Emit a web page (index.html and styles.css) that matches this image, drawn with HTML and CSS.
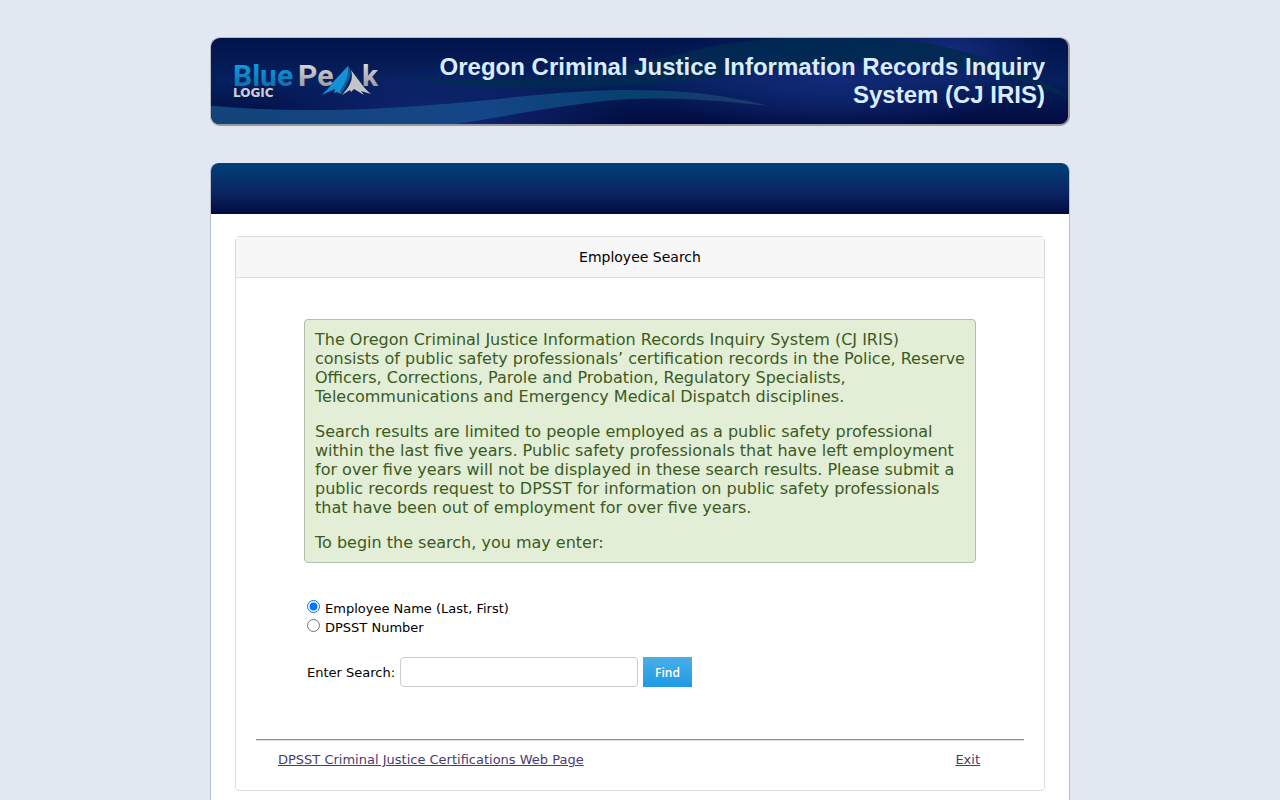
FILE: index.html
```html
<!DOCTYPE html>
<html lang="en">
<head>
    <meta charset="UTF-8">
    <meta name="viewport" content="width=device-width, initial-scale=1.0">
    <title>CJ IRIS - Employee Search</title>
    <link rel="stylesheet" href="styles.css">
</head>
<body>
    <div class="wrapper">
        <header class="banner">
            <svg class="banner-bg" viewBox="0 0 856 85" preserveAspectRatio="none" aria-hidden="true">
                <defs>
                    <linearGradient id="wave" x1="0" x2="1" y1="0" y2="0">
                        <stop offset="0" stop-color="#144a80"/>
                        <stop offset="0.5" stop-color="#15498a"/>
                        <stop offset="0.75" stop-color="#064571"/>
                        <stop offset="1" stop-color="#223c6c"/>
                    </linearGradient>
                    <radialGradient id="glow">
                        <stop offset="0" stop-color="#122a78"/>
                        <stop offset="1" stop-color="#122a78" stop-opacity="0"/>
                    </radialGradient>
                </defs>
                <ellipse cx="620" cy="40" rx="190" ry="55" fill="url(#glow)"/>
                <ellipse cx="740" cy="10" rx="100" ry="40" fill="url(#glow)"/>
                <ellipse cx="230" cy="85" rx="190" ry="60" fill="url(#glow)"/>
                <path d="M195 38 C330 50 420 28 505 7 C600 -7 700 -5 765 18 C810 34 840 43 856 60 C800 34 735 22 650 24 C560 29 500 43 410 47 C320 53 250 50 195 38Z" fill="#002a50" opacity="0.85"/>
                <path d="M0 67 C90 75 180 71 280 61 C350 53 400 50 450 52 C500 54 535 62 557 67 C500 61 450 57 395 62 C340 68 290 78 245 85 L0 85Z" fill="url(#wave)" opacity="0.9"/>
            </svg>
            <svg class="logo" viewBox="0 0 148 36" role="img" aria-label="BluePeak Logic">
                <defs>
                    <linearGradient id="blue" x1="0" x2="0" y1="0" y2="1">
                        <stop offset="0.2" stop-color="#079ee0"/>
                        <stop offset="1" stop-color="#14609c"/>
                    </linearGradient>
                    <linearGradient id="silver" x1="0" x2="0" y1="0" y2="1">
                        <stop offset="0.2" stop-color="#d4d3d5"/>
                        <stop offset="1" stop-color="#8b8c94"/>
                    </linearGradient>
                </defs>
                <text class="logo-name" x="0" y="23" fill="url(#blue)">Blue</text>
                <text class="logo-name" x="65" y="23" fill="url(#silver)">Pe</text>
                <text class="logo-name" x="129" y="23" fill="url(#silver)">k</text>
                <text class="logo-sub" x="0" y="34" fill="#d0d0d4">LOGIC</text>
                <path d="M88 32 C94 28 97 23 101 18 L115 3 C118 8 118 13 115 18 L108 31 L104 29 L101 30 L102 26 C97 28 94 30 88 32Z" fill="#1592d6"/>
                <path d="M115 3 C118 6 119 12 115 19 C113 23 111 27 108 31 L107 28 C112 20 116 13 115 3Z" fill="#125b98"/>
                <path d="M118 7 L127 19 C130 23 134 28 138 31 L128 28 L131 32 L121 26 L118 29 L117 27 L109 32 C116 24 121 17 118 7Z" fill="#c3c4c8"/>
            </svg>
            <h1>Oregon Criminal Justice Information Records Inquiry System (CJ IRIS)</h1>
        </header>

        <main class="content">
            <div class="menu-bar"></div>
            <section class="panel">
                <h2>Employee Search</h2>
                <div class="panel-body">
                    <div class="info">
                        <p>The Oregon Criminal Justice Information Records Inquiry System (CJ IRIS) consists of public safety professionals’ certification records in the Police, Reserve Officers, Corrections, Parole and Probation, Regulatory Specialists, Telecommunications and Emergency Medical Dispatch disciplines.</p>
                        <p>Search results are limited to people employed as a public safety professional within the last five years. Public safety professionals that have left employment for over five years will not be displayed in these search results. Please submit a public records request to DPSST for information on public safety professionals that have been out of employment for over five years.</p>
                        <p>To begin the search, you may enter:</p>
                    </div>
                    <form class="search-form">
                        <div class="option">
                            <input type="radio" id="by-name" name="searchType" checked>
                            <label for="by-name">Employee Name (Last, First)</label>
                        </div>
                        <div class="option">
                            <input type="radio" id="by-number" name="searchType">
                            <label for="by-number">DPSST Number</label>
                        </div>
                        <div class="search-row">
                            <label for="search">Enter Search:</label>
                            <input type="text" id="search" name="search">
                            <button type="button">Find</button>
                        </div>
                    </form>
                    <hr>
                    <div class="links">
                        <a href="#">DPSST Criminal Justice Certifications Web Page</a>
                        <a href="#">Exit</a>
                    </div>
                </div>
            </section>
        </main>
    </div>
</body>
</html>
```
FILE: styles.css
```css
* {
    box-sizing: border-box;
}
body {
    margin: 0;
    background-color: #e1e8f2;
    color: #000;
    font-family: Verdana, "DejaVu Sans", sans-serif;
    font-size: 13px;
}
.wrapper {
    max-width: 860px;
    margin: 0 auto;
    padding-top: 37px;
}

/* Banner */
.banner {
    position: relative;
    display: flex;
    justify-content: space-between;
    align-items: flex-start;
    min-height: 89px;
    padding: 15px 23px 15px 22px;
    border: 1px solid #b5b9c2;
    border-right: 2px solid #999;
    border-bottom: 2px solid #999;
    border-radius: 10px;
    background: linear-gradient(#02134a, #06205e 50%, #020b40);
    overflow: hidden;
}
.banner-bg {
    position: absolute;
    top: 0;
    left: 0;
    width: 100%;
    height: 100%;
}
.logo {
    position: relative;
    flex: none;
    width: 148px;
    height: 36px;
    margin-top: 10px;
    overflow: visible;
}
.logo-name {
    font-family: Roboto, sans-serif;
    font-size: 30px;
    font-weight: 700;
}
.logo-sub {
    font-family: "DejaVu Sans", sans-serif;
    font-size: 12px;
    font-weight: 700;
}
.banner h1 {
    position: relative;
    max-width: 640px;
    margin: 0;
    color: #dcecff;
    font-family: Arial, "Liberation Sans", sans-serif;
    font-size: 24px;
    line-height: 28px;
    text-align: right;
}

/* Main area */
.content {
    margin-top: 37px;
    padding-bottom: 24px;
    border: 1px solid #b8c0cc;
    border-top: 0;
    border-radius: 8px 8px 0 0;
    background-color: #fff;
}
.menu-bar {
    height: 51px;
    border-radius: 8px 8px 0 0;
    background: linear-gradient(#00407a, #0c2461 60%, #000b40);
}
.panel {
    margin: 22px 24px 0;
    border: 1px solid #dcdcdc;
    border-radius: 4px;
}
.panel h2 {
    margin: 0;
    padding: 10px;
    border-bottom: 1px solid #dcdcdc;
    background-color: #f7f7f7;
    font-size: 14px;
    font-weight: 400;
    line-height: 20px;
    text-align: center;
}
.panel-body {
    padding: 41px 20px 21px;
}
.info {
    margin: 0 48px;
    padding: 10px;
    border: 1px solid #b4bcae;
    border-radius: 4px;
    background-color: #e2eed6;
    color: #3c5a1e;
    font-size: 16px;
    line-height: 19px;
}
.info p {
    margin: 0 0 16px;
}
.info p:last-child {
    margin-bottom: 0;
}

/* Search form */
.search-form {
    margin: 36px 51px 0;
}
.option {
    display: flex;
    align-items: center;
    gap: 5px;
    line-height: 19px;
}
.option input {
    width: 13px;
    height: 13px;
    margin: 0 0 4px;
}
.search-row {
    display: flex;
    align-items: center;
    gap: 5px;
    margin-top: 20px;
}
.search-row input {
    width: 238px;
    height: 30px;
    padding: 4px 8px;
    border: 1px solid #ccc;
    border-radius: 4px;
}
.search-row button {
    height: 30px;
    padding: 0 12px;
    border: 0;
    background: linear-gradient(#4aaee8, #1f9ae4);
    color: #fff;
    font-family: "Open Sans", sans-serif;
    font-size: 12px;
    font-weight: 600;
}
hr {
    margin: 52px 0 0;
    border: 0;
    border-top: 1px solid #8c8c8c;
    border-bottom: 1px solid #ddd;
}
.links {
    display: flex;
    justify-content: space-between;
    padding: 10px 44px 0 22px;
    line-height: 18px;
}
.links a {
    color: #4b3a70;
}
```
